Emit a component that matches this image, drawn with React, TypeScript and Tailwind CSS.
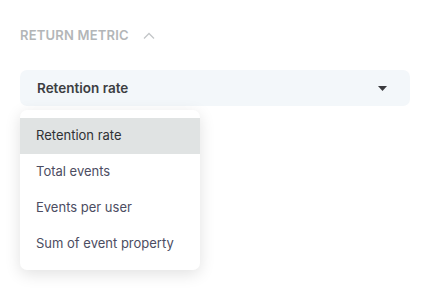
import React from "react";

export default function App() {
  const items = ["Retention rate", "Total events", "Events per user", "Sum of event property"];
  return (
    <div className="w-[428px] h-[294px] bg-white relative" style={{ fontFamily: "Inter, 'Noto Sans', sans-serif" }}>
      <div className="px-5 pt-[27px]">
        <div className="flex items-center h-[17px] gap-[14px]">
          <span className="text-[13px] font-semibold tracking-[0.2px] text-[#b3b6b8]">RETURN METRIC</span>
          <svg width="12" height="8" viewBox="0 0 12 8" className="mt-[1px]">
            <path d="M1 6.5 L6 1.5 L11 6.5" fill="none" stroke="#c3c6c8" strokeWidth="1.3" />
          </svg>
        </div>
        <div className="mt-[26px] h-[36px] w-[390px] rounded-[7px] bg-[#f3f7fa] flex items-center justify-between pl-[17px] pr-[23px]">
          <span className="text-[13.5px] font-semibold text-[#3c3e42]">Retention rate</span>
          <svg width="9" height="5" viewBox="0 0 9 5">
            <path d="M0 0 L9 0 L4.5 5 Z" fill="#3a3a3e" />
          </svg>
        </div>
      </div>
      <div className="absolute left-5 top-[110px] w-[180px] rounded-[7px] bg-white py-2 shadow-[0_4px_16px_rgba(0,0,0,0.12)]">
        {items.map((t, i) => (
          <div
            key={t}
            className={`h-[36px] flex items-center pl-4 text-[13px] ${i === 0 ? "bg-[#e0e3e3] text-[#2f3134]" : "text-[#4c4d62]"}`}
          >
            {t}
          </div>
        ))}
      </div>
    </div>
  );
}
